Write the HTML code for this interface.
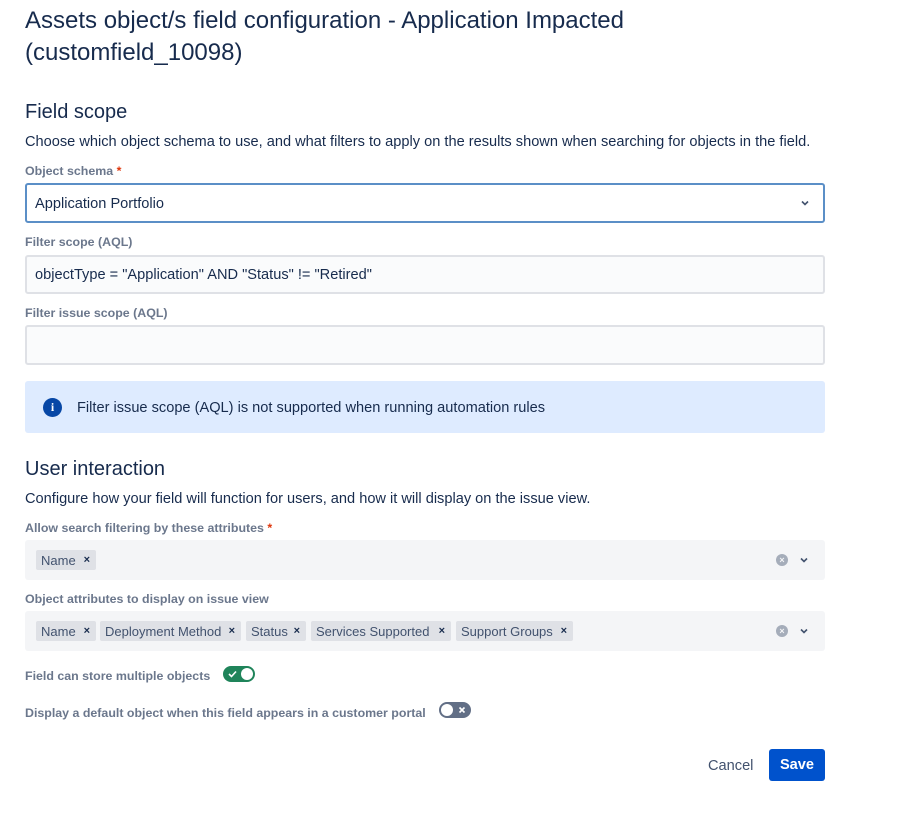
<!DOCTYPE html>
<html><head><meta charset="utf-8"><style>
*{box-sizing:border-box;margin:0;padding:0}
body{width:900px;height:825px;background:#fff;font-family:"Liberation Sans",sans-serif;color:#172b4d;position:relative;overflow:hidden}
.a{position:absolute;white-space:nowrap}
.t{font-size:24px;left:25px;top:7px}
.h{font-size:20px;left:25px}
.d{font-size:14.6px;left:25px;color:#172b4d}
.l{font-size:12.4px;font-weight:bold;color:#6b778c;left:25px}
.l b{color:#de350b}
.box{position:absolute;left:25px;width:800px;border-radius:3px}
.inp{background:#fafbfc;border:2px solid #dfe1e6;font-size:14.6px;padding:10px 8px}
.sel{background:#f4f5f7;height:40px}
.tag{position:absolute;top:10px;height:20px;background:#dfe1e6;font-size:13px;color:#42526e;padding:3px 5px;border-radius:2px}
.tag i{position:absolute;right:6px;top:5px;font-style:normal;font-size:11px;font-weight:bold;color:#172b4d;line-height:11px}
.clr{position:absolute;right:37px;top:14px;width:12px;height:12px;border-radius:50%;background:#a5adba;color:#f4f5f7;font-size:9px;line-height:12px;text-align:center;font-weight:bold}
.chev{position:absolute;right:15px;top:14px}
</style></head><body>
<div class="a t" style="top:7px">Assets object/s field configuration - Application Impacted</div>
<div class="a t" style="top:39px">(customfield_10098)</div>
<div class="a h" style="top:101px">Field scope</div>
<div class="a d" style="top:134px">Choose which object schema to use, and what filters to apply on the results shown when searching for objects in the field.</div>
<div class="a l" style="top:164px">Object schema<b> *</b></div>
<div class="box" style="top:183px;height:40px;border:2px solid #5b8fc7;background:#fff;font-size:14.6px;padding:11px 8px">Application Portfolio
<svg class="chev" style="top:12px;right:12px" width="12" height="12" viewBox="0 0 12 12"><path d="M3 4.5l3 3 3-3" fill="none" stroke="#42526e" stroke-width="1.6"/></svg></div>
<div class="a l" style="top:235px">Filter scope (AQL)</div>
<div class="box inp" style="top:255px;height:39px">objectType = "Application" AND "Status" != "Retired"</div>
<div class="a l" style="top:306px">Filter issue scope (AQL)</div>
<div class="box inp" style="top:325px;height:40px"></div>
<div class="box" style="top:381px;height:52px;background:#deebff"></div>
<div class="a" style="left:43px;top:398px;width:19px;height:19px;border-radius:50%;background:#0747a6;color:#fff;font-size:12px;font-weight:bold;text-align:center;line-height:19px;font-family:'Liberation Serif',serif">i</div>
<div class="a d" style="left:77px;top:400px">Filter issue scope (AQL) is not supported when running automation rules</div>
<div class="a h" style="top:458px">User interaction</div>
<div class="a d" style="top:491px">Configure how your field will function for users, and how it will display on the issue view.</div>
<div class="a l" style="top:521px">Allow search filtering by these attributes<b> *</b></div>
<div class="box sel" style="top:540px">
<span class="tag" style="left:11px;width:60px">Name<i>×</i></span>
<div class="clr">×</div>
<svg class="chev" width="12" height="12" viewBox="0 0 12 12"><path d="M3 4.5l3 3 3-3" fill="none" stroke="#42526e" stroke-width="1.6"/></svg></div>
<div class="a l" style="top:592px">Object attributes to display on issue view</div>
<div class="box sel" style="top:611px">
<span class="tag" style="left:11px;width:60px">Name<i>×</i></span>
<span class="tag" style="left:75px;width:141px">Deployment Method<i>×</i></span>
<span class="tag" style="left:221px;width:60px">Status<i>×</i></span>
<span class="tag" style="left:286px;width:140px">Services Supported<i>×</i></span>
<span class="tag" style="left:431px;width:117px">Support Groups<i>×</i></span>
<div class="clr">×</div>
<svg class="chev" width="12" height="12" viewBox="0 0 12 12"><path d="M3 4.5l3 3 3-3" fill="none" stroke="#42526e" stroke-width="1.6"/></svg></div>
<div class="a l" style="top:669px">Field can store multiple objects</div>
<div class="a" style="left:223px;top:666px;width:32px;height:16px;border-radius:8px;background:#1f845a">
<svg style="position:absolute;left:5px;top:4px" width="9" height="8" viewBox="0 0 9 8"><path d="M1 4l2.5 2.5L8 1.5" fill="none" stroke="#fff" stroke-width="1.6"/></svg>
<span style="position:absolute;right:2px;top:2px;width:12px;height:12px;border-radius:50%;background:#fff"></span></div>
<div class="a l" style="top:706px">Display a default object when this field appears in a customer portal</div>
<div class="a" style="left:439px;top:702px;width:32px;height:16px;border-radius:8px;background:#626f86">
<span style="position:absolute;left:2px;top:2px;width:12px;height:12px;border-radius:50%;background:#fff"></span>
<svg style="position:absolute;right:5px;top:4px" width="8" height="8" viewBox="0 0 8 8"><path d="M1.5 1.5l5 5M6.5 1.5l-5 5" stroke="#fff" stroke-width="1.6"/></svg></div>
<div class="a" style="left:708px;top:758px;font-size:14.6px;color:#42526e">Cancel</div>
<div class="a" style="left:769px;top:749px;width:56px;height:32px;background:#0052cc;border-radius:3px;color:#fff;font-size:14.6px;font-weight:bold;text-align:center;line-height:32px">Save</div>
</body></html>
